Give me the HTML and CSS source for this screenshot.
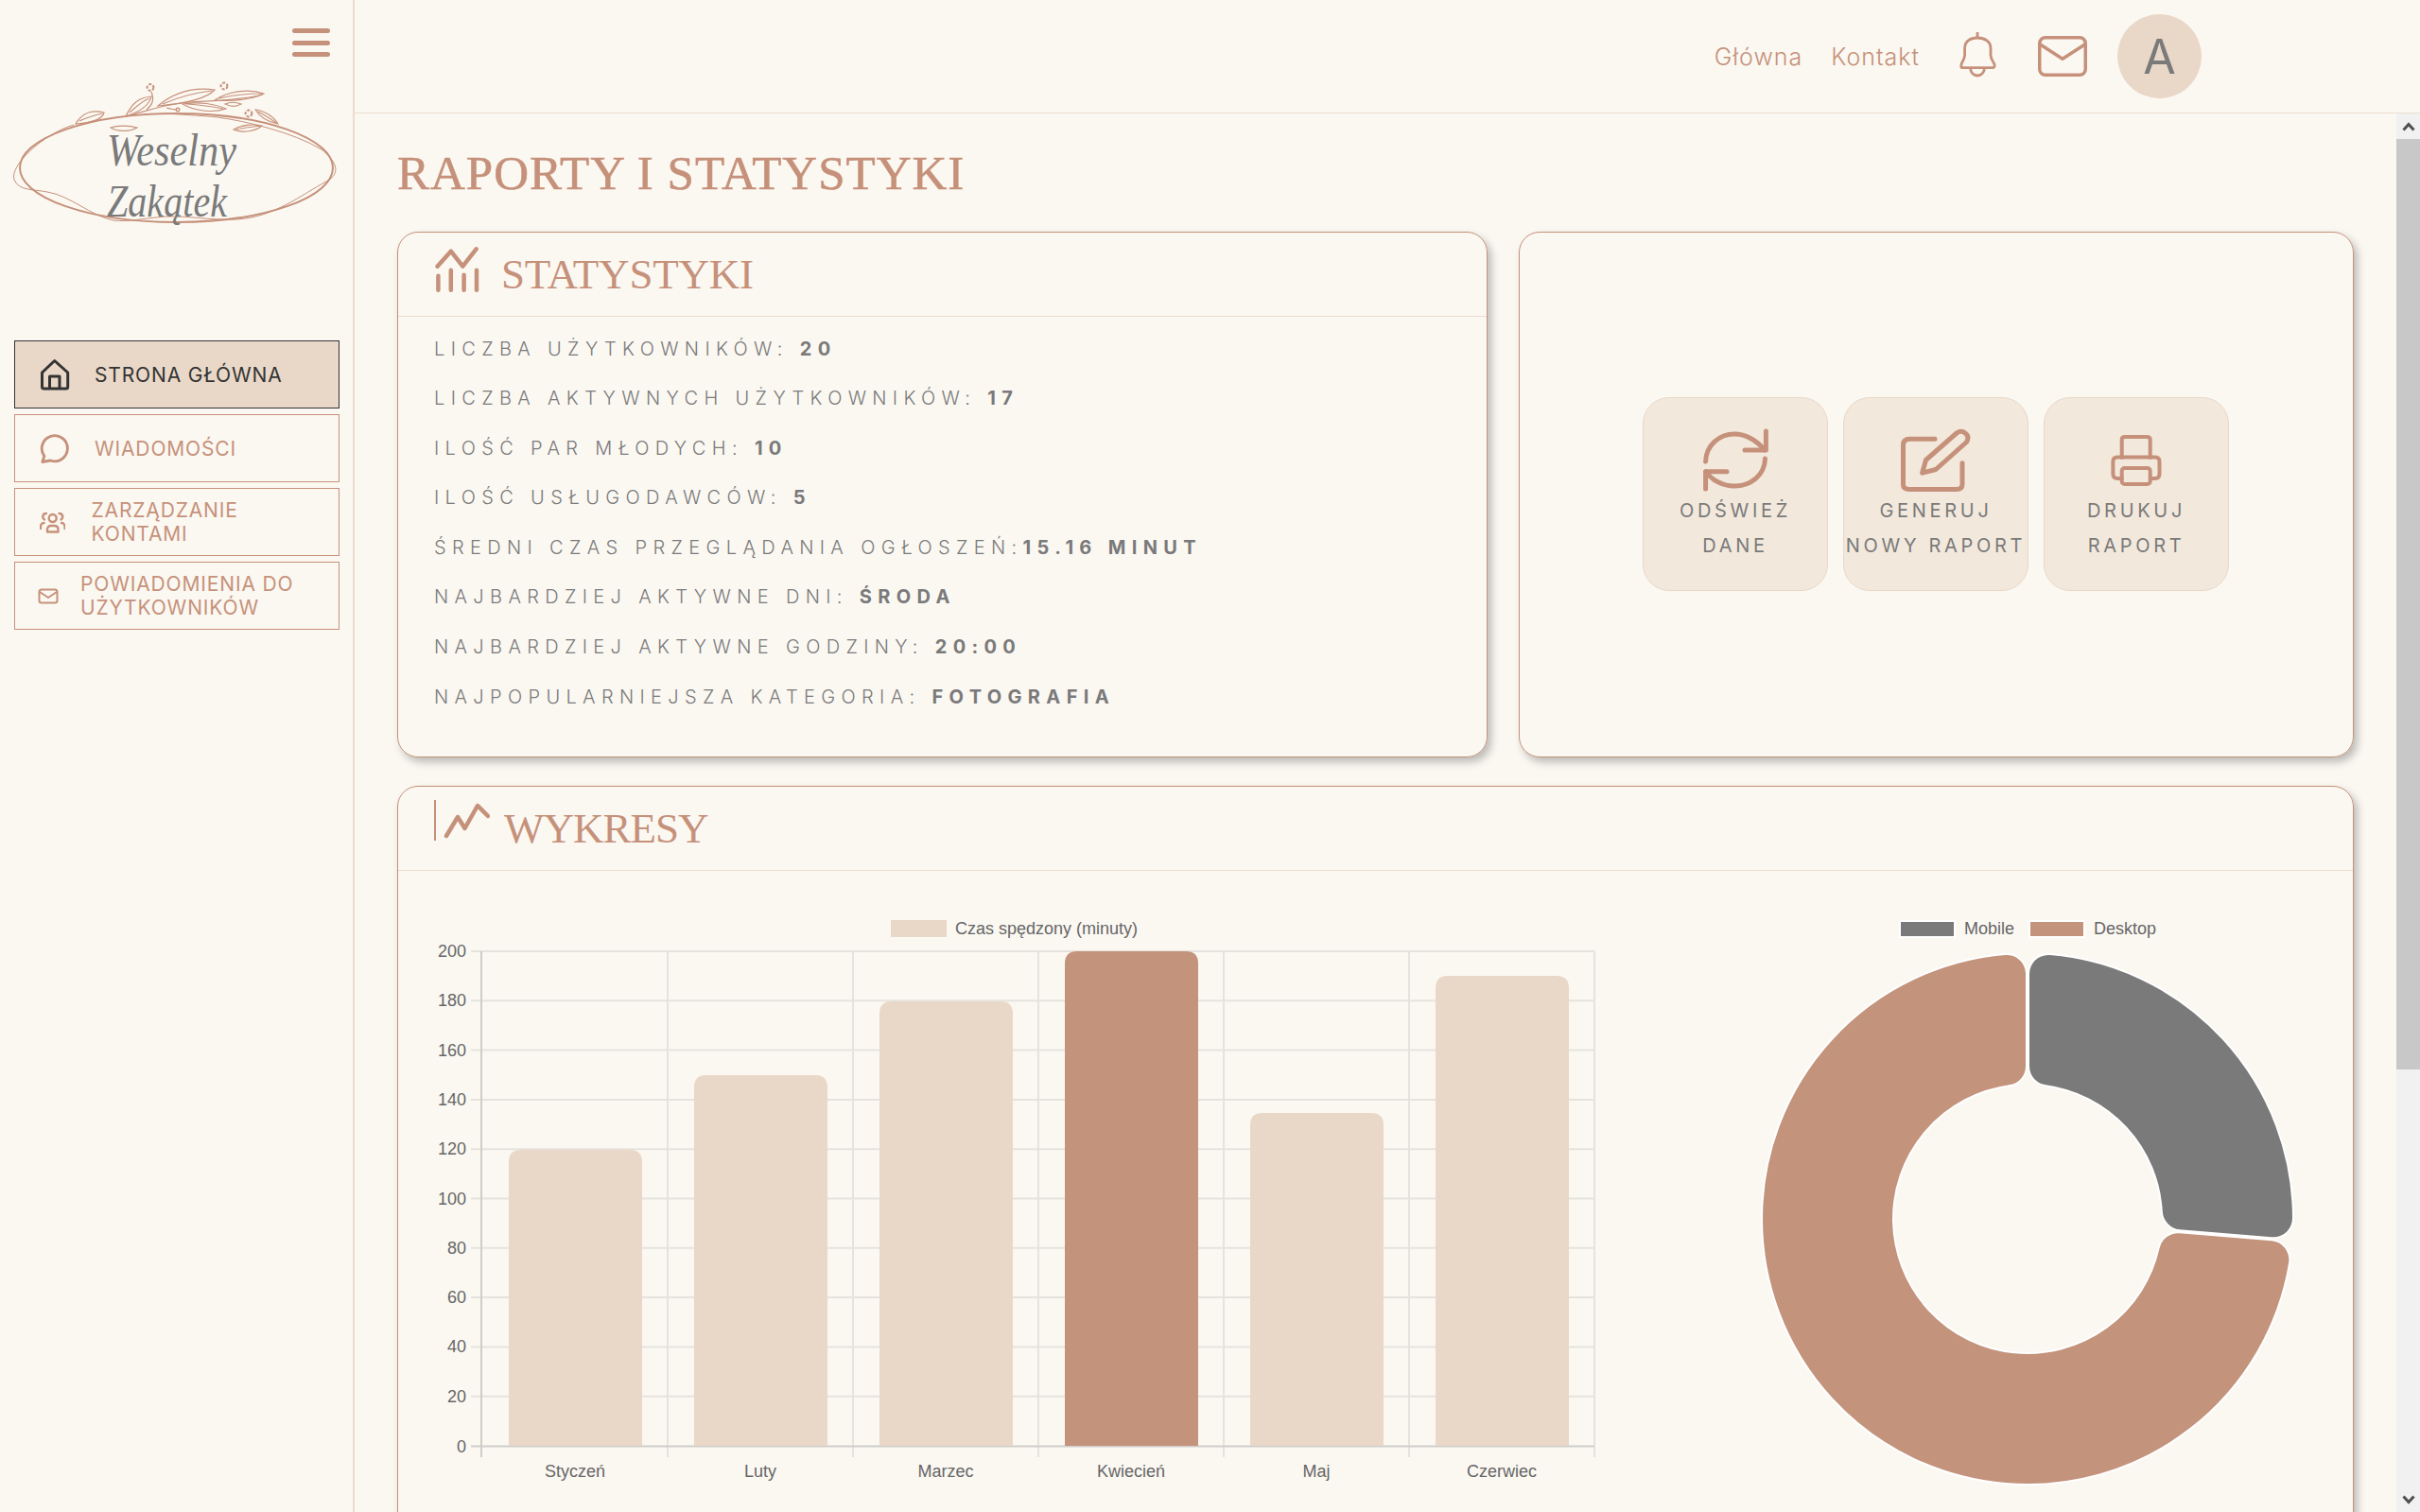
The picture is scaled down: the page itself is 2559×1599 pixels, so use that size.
FILE: index.html
```html
<!DOCTYPE html>
<html lang="pl">
<head>
    <meta charset="UTF-8" />
    <title>Weselny Zakątek - Raporty i statystyki</title>
    <link rel="stylesheet" href="styles.css">
</head>
<body>

<aside class="sidebar">
    <button class="menu-btn" aria-label="Menu">
        <span></span><span></span><span></span>
    </button>

    <svg class="logo" viewBox="0 70 374 180" fill="none" stroke="#c6917a">
        <ellipse cx="186.5" cy="177.5" rx="165.5" ry="57.5" stroke-width="2"/>
        <path stroke-width="1" d="M78 132 C45 142 10 175 15 190 C20 202 35 200 50 203 C75 207 95 228 120 233 C135 235 150 231 175 229 C200 228 220 233 250 232 C290 230 320 205 345 192 C362 183 355 170 340 158 C310 140 260 128 230 124 C210 122 190 121 173 120"/>
        <g stroke-width="1.2">
            <path d="M133 123 C160 116 175 110 200 108 C220 107 255 106 278 100"/>
            <path d="M80 131 C88 118 98 116 110 119 C108 127 95 130 80 131 Z M84 128 C92 124 100 122 108 120"/>
            <path d="M133 123 C140 108 148 103 160 102 C158 112 148 118 133 123 Z M137 119 C145 112 150 107 158 104"/>
            <path d="M167 112 C185 97 205 92 227 95 C218 105 190 110 167 112 Z M172 110 C190 102 205 98 224 96"/>
            <path d="M227 106 C240 97 262 93 279 99 C265 106 245 107 227 106 Z M232 104 C245 101 262 99 276 99"/>
            <path d="M193 110 C210 107 228 110 239 115 C225 120 205 117 193 110 Z M197 110 C212 111 226 113 236 115"/>
            <path d="M270 116 C280 117 290 124 294 131 C283 129 275 124 270 116 Z M273 118 C280 122 287 126 292 130"/>
            <path d="M247 137 C255 132 268 131 277 133 C270 139 257 141 247 137 Z M250 137 C258 135 268 134 276 133"/>
            <path d="M117 135 C125 132 138 133 145 135 C138 139 125 140 117 135 Z"/>
            <path d="M238 110 C245 107 250 108 255 110 C250 113 244 113 238 110 Z"/>
            <path d="M160 97 C163 105 162 110 155 116"/>
            <path d="M176 114 C180 115 184 116 187 116"/>
            <circle cx="159" cy="92.5" r="3.4" stroke-width="2" stroke-dasharray="3 1.6"/>
            <circle cx="237" cy="91" r="3.4" stroke-width="2" stroke-dasharray="3 1.6"/>
            <circle cx="263" cy="120" r="3.4" stroke-width="2" stroke-dasharray="3 1.6"/>
            <circle cx="188" cy="116" r="1.8" stroke-width="1.4"/>
        </g>
        <text class="logo-text" x="113" y="175" textLength="137" lengthAdjust="spacingAndGlyphs">Weselny</text>
        <text class="logo-text" x="113" y="229" textLength="127" lengthAdjust="spacingAndGlyphs">Zakątek</text>
    </svg>

    <nav class="side-nav">
        <a class="nav-item active" href="#">
            <svg width="32" height="36" viewBox="0 0 32 36" fill="none" stroke="currentColor" stroke-width="3" stroke-linejoin="round">
                <path d="M2.5 16 L15.7 3.5 L29.7 16 V31 Q29.7 33 27.7 33 H4.5 Q2.5 33 2.5 31 Z"/>
                <path d="M10.5 33 V20 H21 V33"/>
            </svg>
            <span>STRONA GŁÓWNA</span>
        </a>
        <a class="nav-item" href="#">
            <svg width="32" height="34" viewBox="0 0 33 34" fill="none" stroke="currentColor" stroke-width="3" stroke-linejoin="round">
                <path d="M5 25.5 A14 14 0 1 1 11.5 30.4 L3 32 Z"/>
            </svg>
            <span>WIADOMOŚCI</span>
        </a>
        <a class="nav-item nav-item-users" href="#">
            <svg width="27" height="24" viewBox="1 0 27 24" fill="none" stroke="currentColor" stroke-width="2.4" stroke-linecap="round" stroke-linejoin="round">
                <circle cx="14.7" cy="8" r="4"/>
                <path d="M9 22.5 V20 Q9 16 13 16 H16.5 Q20.5 16 20.5 20 V22.5 Z"/>
                <path d="M8 3 A3.5 3.5 0 0 0 6 9.5 M21.5 3 A3.5 3.5 0 0 1 23.5 9.5"/>
                <path d="M2 19 Q1.5 13 5.5 13 M27.5 19 Q28 13 24 13"/>
            </svg>
            <span>ZARZĄDZANIE KONTAMI</span>
        </a>
        <a class="nav-item nav-item-mail" href="#">
            <svg width="22" height="17" viewBox="0 0 22 17" fill="none" stroke="currentColor" stroke-width="2" stroke-linejoin="round">
                <rect x="1.5" y="1.5" width="19" height="14" rx="2.5"/>
                <path d="M2 4 L11 10 L20 4"/>
            </svg>
            <span>POWIADOMIENIA DO UŻYTKOWNIKÓW</span>
        </a>
    </nav>
</aside>

<div class="page">
    <header class="topbar">
        <a href="#">Główna</a>
        <a href="#">Kontakt</a>
        <svg class="bell" width="40" height="52" viewBox="0 0 40 52" fill="none" stroke="#c6917a" stroke-width="2.8" stroke-linejoin="round">
            <path d="M20 3 V9"/>
            <path d="M3.5 40.7 H36.5 Q38.5 40.7 38 37 C36 33 34 31 34 27 V20 C34 13 28 9 20 9 C12 9 6.6 13 6.6 20 V27 C6.6 31 4.5 33 3 37 Q2.5 40.7 3.5 40.7 Z"/>
            <path d="M12.5 41 C13 46 16 49 20 49 C24 49 27 46 27.5 41"/>
        </svg>
        <svg class="envelope" width="56" height="47" viewBox="0 0 56 47" fill="none" stroke="#c6917a" stroke-width="3.5" stroke-linejoin="round" stroke-linecap="round">
            <rect x="3.75" y="3.75" width="48.5" height="39.5" rx="6"/>
            <path d="M4 10.7 L28 26.3 L52 10.7"/>
        </svg>
        <div class="avatar">A</div>
    </header>

    <div class="page-body">
        <main class="content">
            <h1>RAPORTY I STATYSTYKI</h1>

            <div class="top-row">
                <section class="card">
                    <div class="card-header">
                        <svg class="stat-icon" width="48" height="50" viewBox="0 0 48 50" fill="none" stroke="#c6917a" stroke-width="4.5" stroke-linecap="round" stroke-linejoin="round">
                            <path d="M2.5 21.7 L16.8 5.7 L29.3 21.7 L43.6 3.3"/>
                            <path d="M3.4 31.7 V46.7 M16.8 25.7 V46.7 M30.6 30.7 V46.7 M44 25.7 V46.7"/>
                        </svg>
                        <h2>STATYSTYKI</h2>
                    </div>
                    <ul class="stats">
                        <li>LICZBA UŻYTKOWNIKÓW: <b>20</b></li>
                        <li>LICZBA AKTYWNYCH UŻYTKOWNIKÓW: <b>17</b></li>
                        <li>ILOŚĆ PAR MŁODYCH: <b>10</b></li>
                        <li>ILOŚĆ USŁUGODAWCÓW: <b>5</b></li>
                        <li>ŚREDNI CZAS PRZEGLĄDANIA OGŁOSZEŃ:<b>15.16 MINUT</b></li>
                        <li>NAJBARDZIEJ AKTYWNE DNI: <b>ŚRODA</b></li>
                        <li>NAJBARDZIEJ AKTYWNE GODZINY: <b>20:00</b></li>
                        <li>NAJPOPULARNIEJSZA KATEGORIA: <b>FOTOGRAFIA</b></li>
                    </ul>
                </section>

                <section class="card actions">
                    <button class="action-btn">
                        <svg width="74" height="70" viewBox="0 0 74 70" fill="none" stroke="#c6917a" stroke-width="5" stroke-linecap="round" stroke-linejoin="round">
                            <path d="M5.6 36 C6 19 20 7 36 7 C48 7 60 14 68 24"/>
                            <path d="M69.4 4 V24 H47"/>
                            <path d="M68.5 33 C68 50 54 62 36 62 C24 62 12 56 5.6 46.7"/>
                            <path d="M5.6 65 V46.7 H28"/>
                        </svg>
                        <span>ODŚWIEŻ<br>DANE</span>
                    </button>
                    <button class="action-btn">
                        <svg width="85" height="70" viewBox="0 1.5 85 70" fill="none" stroke="#c6917a" stroke-width="5" stroke-linecap="round" stroke-linejoin="round">
                            <path d="M41 13.7 H14.5 Q7.5 13.7 7.5 20 V62 Q7.5 67 14.5 67 H63.5 Q70 67 70 62 V39.3"/>
                            <path d="M27.6 49.7 L31.5 36 L64 7.5 Q69 4 73 7.5 Q78 11 74.5 17 L42 46 Z"/>
                        </svg>
                        <span>GENERUJ<br>NOWY RAPORT</span>
                    </button>
                    <button class="action-btn">
                        <svg width="62" height="70" viewBox="0 -5 62 70" fill="none" stroke="#c6917a" stroke-width="4" stroke-linecap="round" stroke-linejoin="round">
                            <path d="M15.7 27 V8 Q15.7 5 19 5 H42 Q45.7 5 45.7 8 V27"/>
                            <path d="M15.7 49 H11 Q6.4 49 6.4 44 V31 Q6.4 26.5 11 26.5 H51 Q55.5 26.5 55.5 31 V44 Q55.5 49 51 49 H45.7"/>
                            <rect x="15.7" y="38" width="30" height="17" rx="3"/>
                        </svg>
                        <span>DRUKUJ<br>RAPORT</span>
                    </button>
                </section>
            </div>

            <section class="card charts-card">
                <div class="card-header">
                    <svg class="chart-icon" width="60" height="48" viewBox="0 0 60 48" fill="none" stroke="#c6917a" stroke-linecap="round" stroke-linejoin="round">
                        <path stroke-width="2" stroke-linecap="butt" d="M2 2 V45"/>
                        <path stroke-width="4.5" d="M14 40 L26 20 L33.5 32 L47 8 L58 19"/>
                    </svg>
                    <h2>WYKRESY</h2>
                </div>
                <div class="charts">
                    <svg class="bar-chart" width="1300" height="620" viewBox="440 960 1300 620">
                        <rect x="942" y="973" width="59" height="18" fill="#e9d8c8"/>
                        <text class="chart-text" x="1010" y="988">Czas spędzony (minuty)</text>

                        <path class="grid" d="M498 1006 H1686 M498 1058.3 H1686 M498 1110.6 H1686 M498 1162.9 H1686 M498 1215.2 H1686 M498 1267.5 H1686 M498 1319.8 H1686 M498 1372.1 H1686 M498 1424.4 H1686 M498 1476.7 H1686"/>
                        <path class="grid" d="M706 1006 V1541 M902 1006 V1541 M1098 1006 V1541 M1294 1006 V1541 M1490 1006 V1541 M1686 1006 V1541"/>
                        <path class="axis" d="M509 1006 V1541 M498 1529.5 H1686"/>

                        <g fill="#e9d8c8">
                            <path d="M538 1529 V1229 Q538 1216 551 1216 H666 Q679 1216 679 1229 V1529 Z"/>
                            <path d="M734 1529 V1150 Q734 1137 747 1137 H862 Q875 1137 875 1150 V1529 Z"/>
                            <path d="M930 1529 V1072 Q930 1059 943 1059 H1058 Q1071 1059 1071 1072 V1529 Z"/>
                            <path fill="#c4937c" d="M1126 1529 V1019 Q1126 1006 1139 1006 H1254 Q1267 1006 1267 1019 V1529 Z"/>
                            <path d="M1322 1529 V1190 Q1322 1177 1335 1177 H1450 Q1463 1177 1463 1190 V1529 Z"/>
                            <path d="M1518 1529 V1045 Q1518 1032 1531 1032 H1646 Q1659 1032 1659 1045 V1529 Z"/>
                        </g>

                        <g class="chart-text y-labels">
                            <text x="493" y="1012">200</text>
                            <text x="493" y="1064">180</text>
                            <text x="493" y="1117">160</text>
                            <text x="493" y="1169">140</text>
                            <text x="493" y="1221">120</text>
                            <text x="493" y="1274">100</text>
                            <text x="493" y="1326">80</text>
                            <text x="493" y="1378">60</text>
                            <text x="493" y="1430">40</text>
                            <text x="493" y="1483">20</text>
                            <text x="493" y="1536">0</text>
                        </g>
                        <g class="chart-text x-labels">
                            <text x="608" y="1562">Styczeń</text>
                            <text x="804" y="1562">Luty</text>
                            <text x="1000" y="1562">Marzec</text>
                            <text x="1196" y="1562">Kwiecień</text>
                            <text x="1392" y="1562">Maj</text>
                            <text x="1588" y="1562">Czerwiec</text>
                        </g>
                    </svg>

                    <svg class="donut-chart" width="620" height="620" viewBox="1840 960 620 620">
                        <rect x="2009" y="974" width="58" height="17" fill="#7a7a7a" stroke="#fff" stroke-width="2"/>
                        <text class="chart-text" x="2077" y="988">Mobile</text>
                        <rect x="2146" y="974" width="58" height="17" fill="#c4937c" stroke="#fff" stroke-width="2"/>
                        <text class="chart-text" x="2214" y="988">Desktop</text>

                        <path class="slice-edge" d="M2166 1029.93 A260 260 0 0 1 2404 1288.3 L2306.77 1280.3 A163 163 0 0 0 2166 1127.49 Z"/>
                        <path class="slice" fill="#7a7a7a" stroke="#7a7a7a" d="M2166 1029.93 A260 260 0 0 1 2404 1288.3 L2306.77 1280.3 A163 163 0 0 0 2166 1127.49 Z"/>
                        <path class="slice-edge" d="M2400.4 1332.16 A260 260 0 1 1 2122 1029.93 L2122 1127.49 A163 163 0 1 0 2303.17 1324.16 Z"/>
                        <path class="slice" fill="#c4937c" stroke="#c4937c" d="M2400.4 1332.16 A260 260 0 1 1 2122 1029.93 L2122 1127.49 A163 163 0 1 0 2303.17 1324.16 Z"/>
                    </svg>
                </div>
            </section>
        </main>

        <div class="scrollbar">
            <div class="scroll-btn">
                <svg width="14" height="10" viewBox="0 0 14 10" fill="none" stroke="#505050" stroke-width="3"><path d="M1.5 8.5 L7 2.5 L12.5 8.5"/></svg>
            </div>
            <div class="scroll-thumb"></div>
            <div class="scroll-track"></div>
            <div class="scroll-btn">
                <svg width="14" height="10" viewBox="0 0 14 10" fill="none" stroke="#505050" stroke-width="3"><path d="M1.5 1.5 L7 7.5 L12.5 1.5"/></svg>
            </div>
        </div>
    </div>
</div>

</body>
</html>
```

FILE: styles.css
```css
* {
    box-sizing: border-box;
}
html, body {
    height: 100%;
}
body {
    margin: 0;
    display: flex;
    height: 100vh;
    overflow: hidden;
    background-color: #fbf8f2;
    font-family: Inter, "Noto Sans", sans-serif;
    color: #7a7a7a;
}

/* sidebar */
.sidebar {
    width: 375px;
    flex-shrink: 0;
    border-right: 2px solid #ecdccf;
    padding-top: 30px;
}
.menu-btn {
    display: flex;
    flex-direction: column;
    gap: 7.5px;
    width: 40px;
    margin-left: 309px;
    padding: 0;
    border: none;
    background: none;
}
.menu-btn span {
    height: 5px;
    border-radius: 3px;
    background-color: #c6917a;
}
.logo {
    display: block;
    width: 374px;
    height: 180px;
    margin-top: 10px;
}
.logo-text {
    font-family: "Liberation Serif", serif;
    font-style: italic;
    font-size: 48px;
    fill: #7a7a7a;
    stroke: none;
}
.side-nav {
    display: flex;
    flex-direction: column;
    gap: 6px;
    width: 344px;
    margin-left: 15px;
    margin-top: 110px;
}
.nav-item {
    display: flex;
    align-items: center;
    gap: 26px;
    height: 72px;
    padding-left: 26px;
    border: 1.5px solid #c6917a;
    color: #c6917a;
    font-size: 21px;
    line-height: 25px;
    letter-spacing: 0.85px;
    text-decoration: none;
}
.nav-item svg {
    flex-shrink: 0;
}
.nav-item.active {
    background-color: #e9d8c8;
    border-color: #333;
    color: #333;
}
.nav-item-users svg {
    margin-right: 1.5px;
}
.nav-item-mail {
    padding-left: 24px;
    gap: 23px;
}

/* top bar */
.page {
    flex: 1;
    min-width: 0;
    display: flex;
    flex-direction: column;
}
.topbar {
    display: flex;
    align-items: center;
    justify-content: flex-end;
    height: 120px;
    flex-shrink: 0;
    padding-right: 231px;
    border-bottom: 1px solid #ecdccf;
}
.topbar a {
    margin-right: 33px;
    color: #c6917a;
    font-size: 25px;
    font-weight: 300;
    letter-spacing: 1px;
    text-decoration: none;
}
.topbar a:first-child {
    margin-right: 30px;
}
.bell {
    margin-left: 8px;
    margin-right: 41.5px;
    margin-top: -6px;
}
.envelope {
    margin-right: 30.5px;
}
.avatar {
    display: flex;
    align-items: center;
    justify-content: center;
    width: 89px;
    height: 89px;
    border-radius: 50%;
    background-color: #e9d8c8;
    font-size: 50px;
    font-weight: 400;
}

/* content */
.page-body {
    flex: 1;
    min-height: 0;
    display: flex;
}
.content {
    flex: 1;
    min-width: 0;
    overflow: hidden;
    padding: 32px 45px 0;
}
h1 {
    margin: 0 0 31px;
    color: #c6917a;
    font-family: "Liberation Serif", serif;
    font-size: 51px;
    font-weight: 400;
    line-height: 62px;
    letter-spacing: 1px;
    -webkit-text-stroke: 0.6px #c6917a;
}
.top-row {
    display: grid;
    grid-template-columns: 1153fr 883fr;
    gap: 33px;
    margin-bottom: 30px;
}
.card {
    border: 1px solid #c2917a;
    border-radius: 22px;
    box-shadow: 4px 5px 8px rgba(0, 0, 0, 0.25);
}
.card-header {
    display: flex;
    align-items: center;
    height: 89px;
    padding-left: 39px;
    border-bottom: 1px solid #ecdccf;
}
h2 {
    margin: 0;
    color: #c6917a;
    font-family: "Liberation Serif", serif;
    font-size: 45px;
    font-weight: 400;
    letter-spacing: -0.2px;
}
.charts-card h2 {
    letter-spacing: -1px;
}
.stat-icon {
    margin-right: 22px;
    margin-top: -10px;
}
.chart-icon {
    margin-left: -2px;
    margin-right: 15px;
    margin-top: -16px;
}
.stats {
    list-style: none;
    margin: 0;
    padding: 7.5px 0 36.5px 38px;
}
.stats li {
    height: 52.6px;
    line-height: 52.6px;
    font-size: 20px;
    font-weight: 300;
    letter-spacing: 6.35px;
    white-space: nowrap;
}
.stats b {
    font-weight: 700;
}
.actions {
    display: flex;
    align-items: center;
    justify-content: center;
    gap: 16px;
    padding-right: 1px;
}
.action-btn {
    display: flex;
    flex-direction: column;
    align-items: center;
    width: 196px;
    height: 205px;
    padding: 31px 0 0;
    border: 1px solid #e9d8c8;
    border-radius: 28px;
    background-color: #f2e8dc;
    color: #7a7a7a;
    font-family: inherit;
    font-size: 20px;
    line-height: 37px;
    letter-spacing: 3.7px;
    white-space: nowrap;
}
.charts {
    display: flex;
    gap: 100px;
    padding: 39px 0 0 19px;
    height: 780px;
}
.grid {
    stroke: #e6e3df;
    stroke-width: 2;
    fill: none;
}
.axis {
    stroke: #cfcdc9;
    stroke-width: 2;
    fill: none;
}
.chart-text {
    font-family: "Liberation Sans", Arial, sans-serif;
    font-size: 18px;
    fill: #666;
}
.y-labels {
    text-anchor: end;
}
.x-labels {
    text-anchor: middle;
}
.slice {
    stroke-width: 40;
    stroke-linejoin: round;
}
.slice-edge {
    fill: #fff;
    stroke: #fff;
    stroke-width: 44;
    stroke-linejoin: round;
}

/* scrollbar */
.scrollbar {
    width: 25px;
    flex-shrink: 0;
    display: flex;
    flex-direction: column;
    background-color: #f1f1f1;
}
.scroll-btn {
    display: flex;
    align-items: center;
    justify-content: center;
    height: 27px;
}
.scroll-thumb {
    height: 984px;
    background-color: #c8c8c8;
}
.scroll-track {
    flex: 1;
}
```
